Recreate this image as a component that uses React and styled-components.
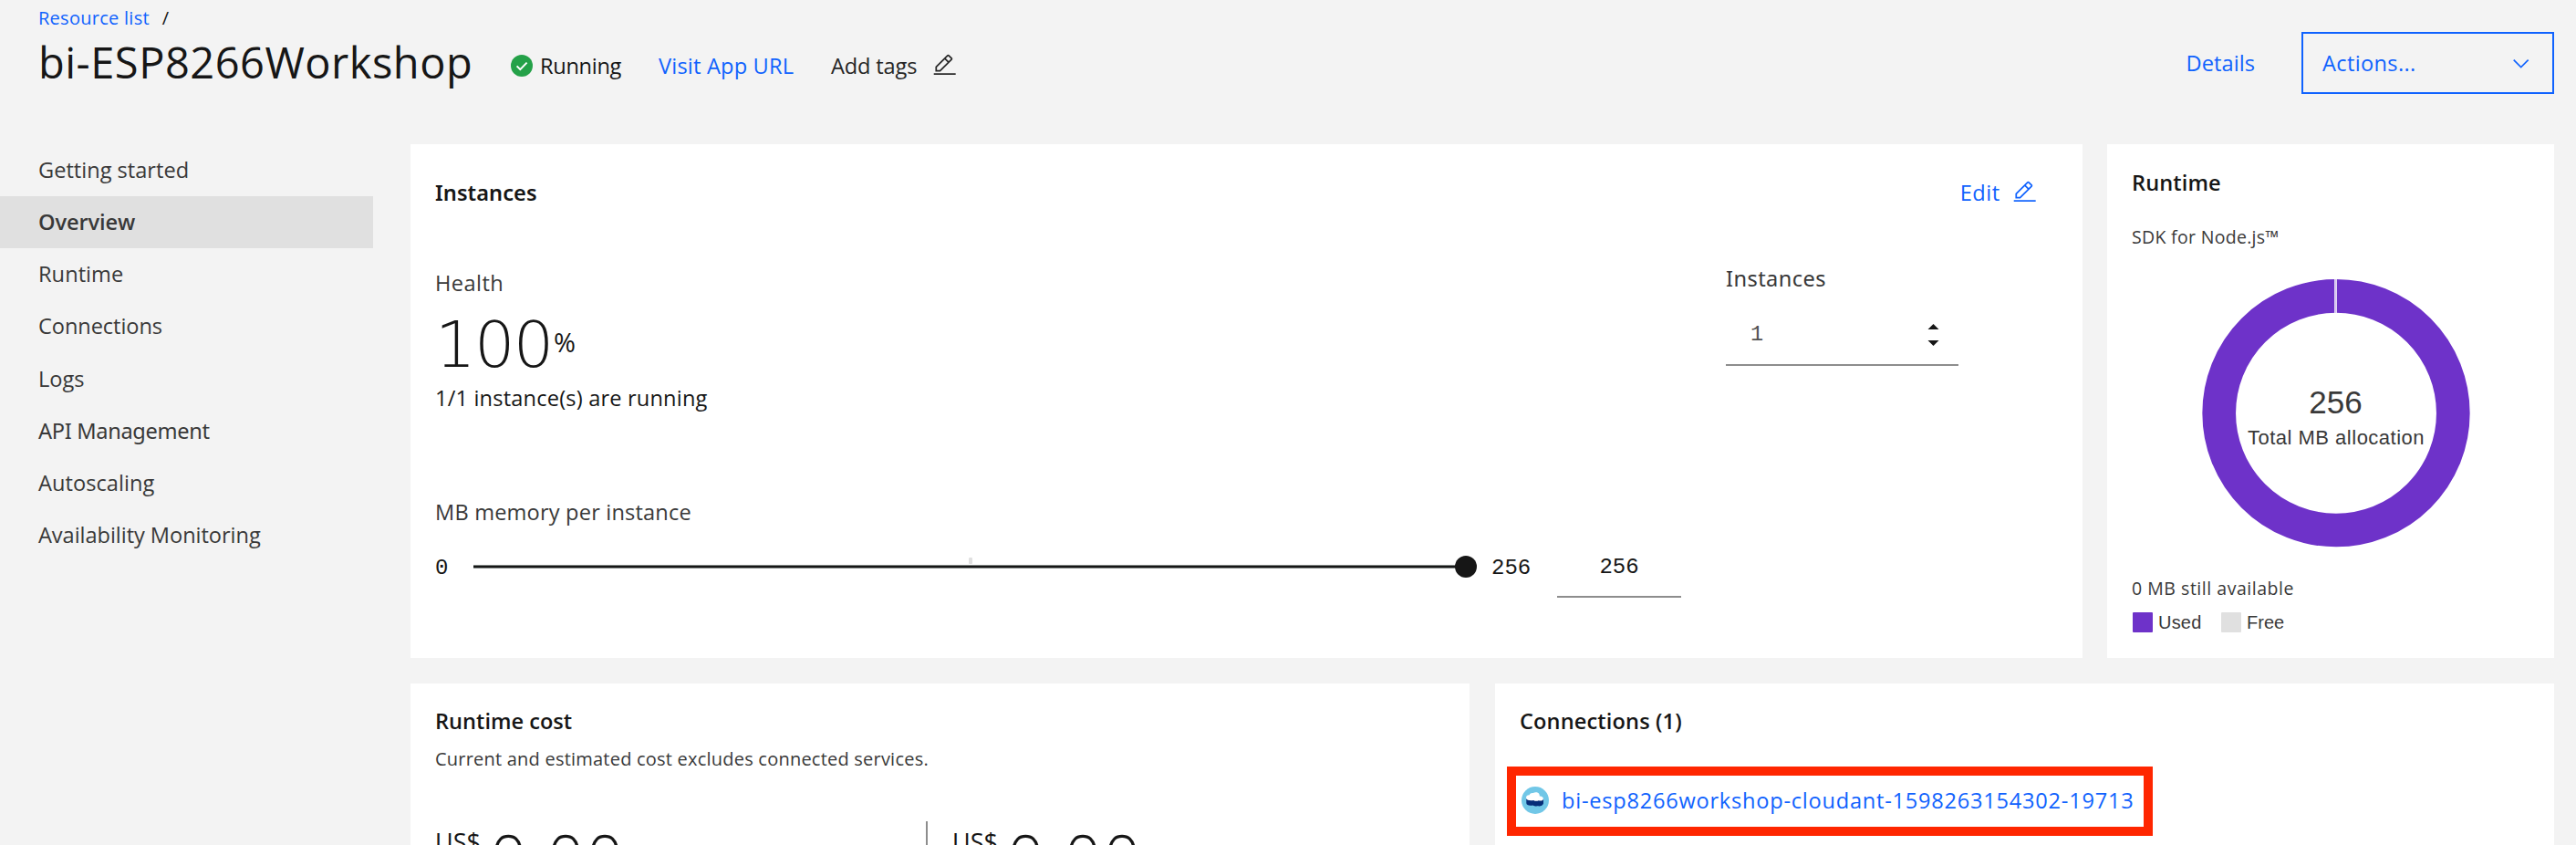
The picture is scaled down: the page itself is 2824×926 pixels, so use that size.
import React from "react";
import styled, { createGlobalStyle } from "styled-components";

const sans = `"Open Sans", "Noto Sans", sans-serif`;
const slab = `"Noto Sans", "Open Sans", sans-serif`;
const grotesk = `"Liberation Sans", Arial, sans-serif`;
const mono = `"Liberation Mono", monospace`;
const light = `"DejaVu Sans Light", "DejaVu Sans ExtraLight", "Open Sans", sans-serif`;

const Global = createGlobalStyle`
  *, *::before, *::after { box-sizing: border-box; }
  body {
    margin: 0;
    background: #f3f3f3;
    color: #161616;
    font: 400 23.6px/32px ${sans};
    font-kerning: normal;
  }
  svg { display: block; flex: none; }
`;

const Page = styled.div`
  width: 2824px;
  height: 926px;
  overflow: hidden;
  white-space: nowrap;
`;

const Header = styled.header`
  display: flex;
  justify-content: space-between;
  align-items: flex-start;
  height: 158px;
  padding: 6px 24px 0 42px;
`;

const Breadcrumb = styled.div`
  display: flex;
  gap: 14px;
  font-size: 20px;
  line-height: 28px;
  letter-spacing: 0.27px;
`;

const Link = styled.a`
  color: #0f62fe;
  letter-spacing: ${(p) => p.$track || 0}px;
`;

const TitleRow = styled.div`
  display: flex;
  align-items: center;
  margin-top: 2px;
`;

const Title = styled.h1`
  width: 518px;
  margin: 0;
  font-size: 47px;
  font-weight: 400;
  line-height: 64px;
  letter-spacing: 0.5px;
`;

const Meta = styled.div`
  display: flex;
  align-items: center;
  margin-top: 8px;
`;

const Status = styled.div`
  display: flex;
  align-items: center;
  gap: 8px;
  width: 162px;
  letter-spacing: -0.3px;
`;

const AppUrl = styled(Link)`
  width: 189px;
`;

const Tags = styled.div`
  display: flex;
  align-items: center;
  gap: 17px;
  letter-spacing: -0.15px;
  color: #262626;
`;

const HeaderActions = styled.div`
  display: flex;
  align-items: center;
  gap: 51px;
  height: 68px;
  margin-top: 29px;
`;

const ActionsButton = styled.div`
  display: flex;
  align-items: center;
  justify-content: space-between;
  width: 277px;
  height: 68px;
  padding: 0 21px 0 21px;
  border: 2px solid #0f62fe;
  color: #0f62fe;
  letter-spacing: 0.35px;
  svg { margin-top: 2px; }
`;

const Body = styled.div`
  display: flex;
`;

const Sidebar = styled.nav`
  flex: none;
  width: 450px;
`;

const NavItem = styled.div`
  width: 409px;
  height: 57.14px;
  padding-left: 42px;
  line-height: 56px;
  letter-spacing: ${(p) => p.$track}px;
  color: #393939;
  font-family: ${(p) => (p.$slab ? slab : sans)};
  font-weight: ${(p) => (p.$current ? 600 : 400)};
  background: ${(p) => (p.$current ? "#e0e0e0" : "transparent")};
`;

const Main = styled.main`
  display: flex;
  flex-direction: column;
  gap: 28px;
  width: 2350px;
`;

const CardRow = styled.div`
  display: flex;
  justify-content: space-between;
`;

const Card = styled.section`
  width: ${(p) => p.$width}px;
  height: ${(p) => p.$height}px;
  padding: ${(p) => p.$top}px 50px 0 27px;
  background: #fff;
`;

const CardTitle = styled.h2`
  margin: 0;
  font: 600 23.6px/32px ${(p) => (p.$slab ? slab : sans)};
  letter-spacing: ${(p) => p.$track || 0}px;
`;

const CardHeader = styled.div`
  display: flex;
  align-items: center;
  justify-content: space-between;
  height: 40px;
`;

const EditLink = styled(Link)`
  display: flex;
  align-items: center;
  gap: 13px;
`;

const Metrics = styled.div`
  display: flex;
  justify-content: space-between;
  margin-top: 58px;
  padding-right: 86px;
`;

const Label = styled.div`
  color: #393939;
  font-family: ${(p) => (p.$slab ? slab : sans)};
  letter-spacing: ${(p) => p.$track || 0}px;
`;

const Health = styled.div`
  padding-top: 5px;
`;

const Percentage = styled.div`
  display: flex;
  align-items: flex-start;
  height: 76px;
  margin-top: 12px;
`;

const BigNumber = styled.div`
  width: 130px;
  padding-top: 2px;
  font: 200 70px/76px ${light};
  letter-spacing: -1.6px;
`;

const PercentSign = styled.div`
  margin-top: 17px;
  font-size: 29px;
  line-height: 40px;
`;

const HealthNote = styled.div`
  margin-top: 6px;
  letter-spacing: 0.18px;
`;

const Field = styled.div`
  width: 255px;
`;

const Stepper = styled.div`
  display: flex;
  align-items: center;
  justify-content: space-between;
  height: 72px;
  margin-top: 8px;
  padding: 5px 21px 0 27px;
  border-bottom: 2px solid #8d8d8d;
  font-family: ${mono};
  color: #525252;
`;

const MemoryLabel = styled(Label)`
  margin-top: 93px;
`;

const SliderRow = styled.div`
  display: flex;
  align-items: center;
  height: 72px;
  margin-top: 8px;
  font-family: ${mono};
  font-size: 24px;
`;

const SliderBound = styled.div`
  width: ${(p) => p.$width}px;
  padding: 3px 0 0 ${(p) => p.$indent || 0}px;
`;

const Track = styled.div`
  position: relative;
  width: 1088px;
  height: 4px;
  background: #161616;
  border: solid #7f8583;
  border-width: 1px 0;
`;

const Thumb = styled.span`
  position: absolute;
  right: -12px;
  top: -11px;
  width: 24px;
  height: 24px;
  border-radius: 50%;
  background: #161616;
`;

const Tick = styled.span`
  position: absolute;
  left: 543px;
  top: -9px;
  width: 4px;
  height: 7px;
  border-radius: 1px;
  background: #e0e0e0;
`;

const MemoryInput = styled.div`
  width: 136px;
  height: 70px;
  padding-top: 21px;
  margin-bottom: 2px;
  border-bottom: 2px solid #8d8d8d;
  text-align: center;
`;

const Caption = styled.div`
  margin-top: ${(p) => p.$gap}px;
  font-size: ${(p) => p.$size || 19.5}px;
  line-height: 28px;
  letter-spacing: ${(p) => p.$track}px;
  color: #393939;
`;

const DonutWrap = styled.div`
  margin: 32px 0 0 77px;
  font-family: ${grotesk};
`;

const Legend = styled.div`
  display: flex;
  margin: 12px 0 0 1px;
  font: 20px/22px ${grotesk};
  color: #393939;
`;

const LegendItem = styled.div`
  display: flex;
  gap: 6px;
  width: 97px;
  letter-spacing: ${(p) => p.$track}px;
  &::before {
    content: "";
    width: 22px;
    height: 22px;
    border-radius: 1px;
    background: ${(p) => p.$color};
  }
`;

const Costs = styled.div`
  display: flex;
  margin-top: 54px;
`;

const Cost = styled.div`
  display: flex;
  align-items: flex-start;
  width: 540px;
  height: 120px;
  & + & {
    border-left: 2px solid #8d8d8d;
    padding-left: 27px;
    margin-left: -2px;
  }
`;

const Currency = styled.div`
  width: 60px;
  margin-top: 3px;
  font-size: 27px;
  line-height: 40px;
`;

const Amount = styled.div`
  font-size: 71px;
  font-weight: 300;
  line-height: 80px;
  letter-spacing: 2.6px;
`;

const Highlight = styled.div`
  display: flex;
  align-items: center;
  gap: 14px;
  width: 708px;
  height: 76px;
  margin: 34px 0 0 -14px;
  padding: 0 0 3px 6px;
  border: 10px solid #ff2600;
`;

const PenIcon = () => (
  <svg width="27.4" height="27.4" viewBox="0 0 32 32" fill="currentColor">
    <path d="M2 26h28v2H2z" />
    <path d="M25.4 9c.8-.8.8-2 0-2.8l-3.6-3.6c-.8-.8-2-.8-2.8 0l-15 15V24h6.4l15-15zM20.4 4L24 7.6l-3 3L17.4 7l3-3zM6 22v-3.6l10-10 3.6 3.6-10 10H6z" />
  </svg>
);

const CheckIcon = () => (
  <svg width="24" height="24" viewBox="0 0 24 24">
    <circle cx="12" cy="12" r="12" fill="#24a148" />
    <path d="M6.6 12.4l3.7 3.7 7.3-7.5" fill="none" stroke="#fff" strokeWidth="2" />
  </svg>
);

const ChevronIcon = () => (
  <svg width="27.4" height="27.4" viewBox="0 0 16 16" fill="currentColor">
    <path d="M8 11L3 6l.7-.7L8 9.600l4.300-4.300.7.7z" />
  </svg>
);

const StepIcon = () => (
  <svg width="13" height="24" viewBox="0 0 13 24" fill="#161616">
    <path d="M6.5 0l6 6h-12zM6.5 24l6-6h-12z" />
  </svg>
);

const CloudantIcon = () => (
  <svg width="30" height="30" viewBox="0 0 30 30">
    <circle cx="15" cy="15" r="15" fill="#71c7e7" />
    <path d="M5.300 13.500h18.700v5c-.7 2.400-3.300 3.200-6.200 2.800-1.600.3-3.800.2-5.200-.9-4 .6-7.300.1-7.300-2.500z" fill="#062d78" />
    <path d="M5 12.500c0-2.200 1.600-3.400 3.600-3.200.6-2 2.600-2.600 4.200-2.200 2-1.400 5.600-1 6.600 1.100.4.800.5 1.600.4 2.300 2.900-.1 4.600 1.700 4 3.500-.6 1.700-3 2-5 1.200-2.300 1.200-4.300.6-5.600-.3-2.800.7-7.600.5-8.200-2.400z" fill="#fff" />
  </svg>
);

const Donut = () => (
  <svg width="294" height="294" viewBox="0 0 294 294" textAnchor="middle" fill="#393939">
    <circle cx="147" cy="146.7" r="128.3" fill="none" stroke="#6e32c9" strokeWidth="36.7" />
    <path d="M146.5 0v37" stroke="#fff" strokeWidth="2.6" />
    <path d="M146.5 0v37" stroke="#b89be4" strokeWidth="0.6" />
    <text x="146.5" y="147" fontSize="35">256</text>
    <text x="147" y="181" fontSize="22" letterSpacing="0.5">Total MB allocation</text>
  </svg>
);

const nav = [
  { label: "Getting started", track: 0 },
  { label: "Overview", track: -0.1, current: true },
  { label: "Runtime", track: 0.05 },
  { label: "Connections", track: -0.08 },
  { label: "Logs", track: 0 },
  { label: "API Management", track: -0.33, slab: true },
  { label: "Autoscaling", track: 0.05 },
  { label: "Availability Monitoring", track: -0.05 },
];

export default function App() {
  return (
    <Page>
      <Global />
      <Header>
        <div>
          <Breadcrumb>
            <Link $track={0.27}>Resource list</Link>
            <span>/</span>
          </Breadcrumb>
          <TitleRow>
            <Title>bi-ESP8266Workshop</Title>
            <Meta>
              <Status>
                <CheckIcon />
                Running
              </Status>
              <AppUrl $track={0.19}>Visit App URL</AppUrl>
              <Tags>
                Add tags
                <PenIcon />
              </Tags>
            </Meta>
          </TitleRow>
        </div>
        <HeaderActions>
          <Link $track={0.05}>Details</Link>
          <ActionsButton>
            Actions...
            <ChevronIcon />
          </ActionsButton>
        </HeaderActions>
      </Header>
      <Body>
        <Sidebar>
          {nav.map((n) => (
            <NavItem key={n.label} $track={n.track} $current={n.current} $slab={n.slab}>
              {n.label}
            </NavItem>
          ))}
        </Sidebar>
        <Main>
          <CardRow>
            <Card $width={1833} $height={563} $top={33}>
              <CardHeader>
                <CardTitle $slab $track={0.06}>Instances</CardTitle>
                <EditLink $track={0.5}>
                  Edit
                  <PenIcon />
                </EditLink>
              </CardHeader>
              <Metrics>
                <Health>
                  <Label $track={0.45}>Health</Label>
                  <Percentage>
                    <BigNumber>100</BigNumber>
                    <PercentSign>%</PercentSign>
                  </Percentage>
                  <HealthNote>1/1 instance(s) are running</HealthNote>
                </Health>
                <Field>
                  <Label $slab $track={0.43}>Instances</Label>
                  <Stepper>
                    1
                    <StepIcon />
                  </Stepper>
                </Field>
              </Metrics>
              <MemoryLabel $track={0.18}>MB memory per instance</MemoryLabel>
              <SliderRow>
                <SliderBound $width={42}>0</SliderBound>
                <Track>
                  <Tick />
                  <Thumb />
                </Track>
                <SliderBound $width={100} $indent={28}>256</SliderBound>
                <MemoryInput>256</MemoryInput>
              </SliderRow>
            </Card>
            <Card $width={490} $height={563} $top={26}>
              <CardTitle $track={0.09}>Runtime</CardTitle>
              <Caption $gap={30} $track={0.31}>SDK for Node.js™</Caption>
              <DonutWrap>
                <Donut />
              </DonutWrap>
              <Caption $gap={31} $track={0.53}>0 MB still available</Caption>
              <Legend>
                <LegendItem $color="#6e32c9" $track={0.2}>Used</LegendItem>
                <LegendItem $color="#e0e0e0" $track={0}>Free</LegendItem>
              </Legend>
            </Card>
          </CardRow>
          <CardRow>
            <Card $width={1161} $height={177} $top={25}>
              <CardTitle>Runtime cost</CardTitle>
              <Caption $gap={12} $size={20} $track={0.22}>
                Current and estimated cost excludes connected services.
              </Caption>
              <Costs>
                <Cost>
                  <Currency>US$</Currency>
                  <Amount>0.00</Amount>
                </Cost>
                <Cost>
                  <Currency>US$</Currency>
                  <Amount>0.00</Amount>
                </Cost>
              </Costs>
            </Card>
            <Card $width={1161} $height={177} $top={25}>
              <CardTitle $track={0.12}>Connections (1)</CardTitle>
              <Highlight>
                <CloudantIcon />
                <Link $track={0.76}>bi-esp8266workshop-cloudant-1598263154302-19713</Link>
              </Highlight>
            </Card>
          </CardRow>
        </Main>
      </Body>
    </Page>
  );
}
